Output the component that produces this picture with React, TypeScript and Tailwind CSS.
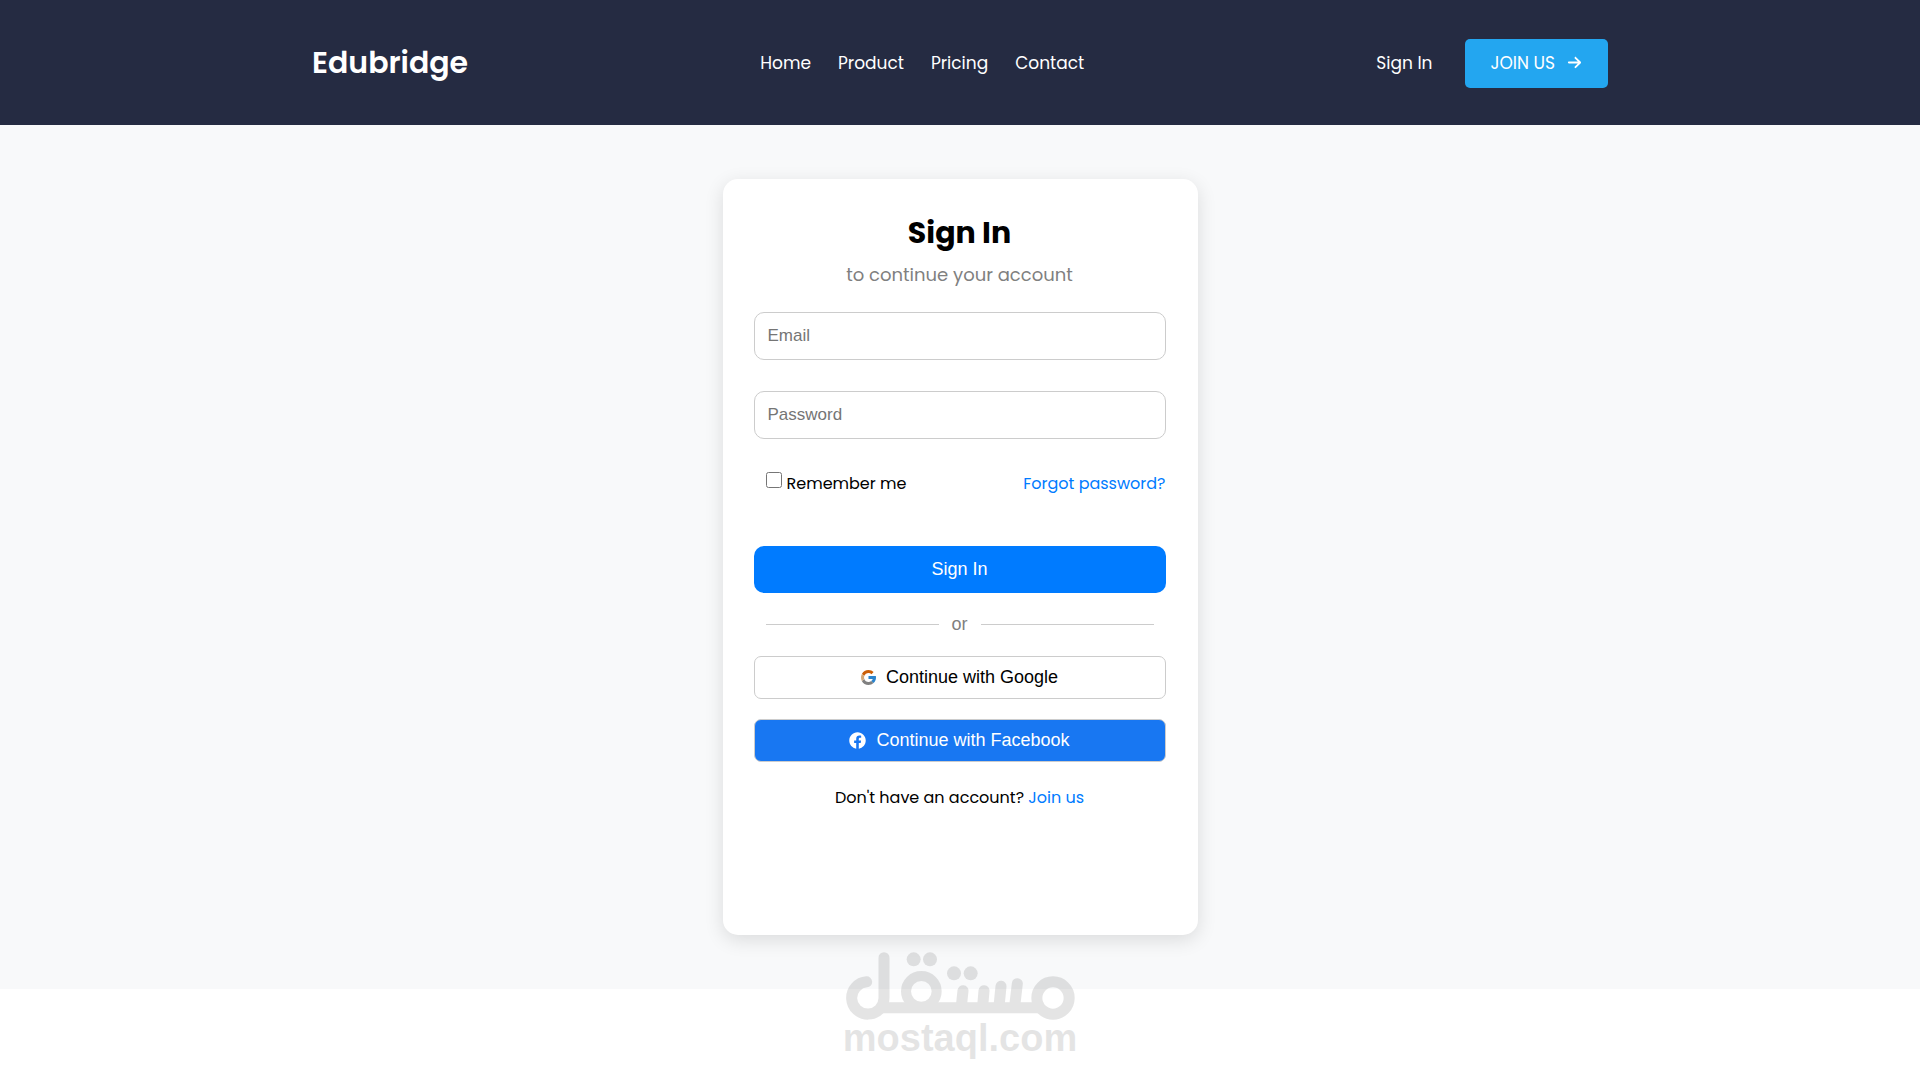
import { FaFacebook } from "react-icons/fa";
import { FaArrowRight } from "react-icons/fa6";

const navLinks = ["Home", "Product", "Pricing", "Contact"];

function GoogleIcon() {
  return (
    <svg viewBox="4 4 40 40" className="size-[15px] shrink-0" aria-hidden="true">
      <path fill="#2b84cd" d="M43.6 20H24v8h11.3c-.8 2.2-2.2 4.2-4.1 5.6l6.2 5.2C37 39.2 44 34 44 24c0-1.300-.1-2.700-.4-4z" />
      <path fill="#cc5f08" d="M6.300 14.700l6.600 4.800C14.700 15.100 19 12 24 12c3.100 0 5.800 1.200 8 3l5.700-5.700C34 6.100 29.300 4 24 4 16.300 4 9.700 8.300 6.300 14.700z" />
      <path fill="#808080" d="M24 44c5.200 0 9.900-2 13.400-5.200l-6.200-5.200C29.200 35.100 26.700 36 24 36c-5.200 0-9.600-3.300-11.300-7.900l-6.500 5C9.500 39.600 16.200 44 24 44z" />
      <path fill="#d3a878" d="M12.900 19.500l-6.600-4.800C4.800 17.500 4 20.700 4 24c0 3.300.8 6.400 2.200 9.100l6.500-5c-.9-2.700-.9-5.800.2-8.600z" />
    </svg>
  );
}

function Header() {
  return (
    <header className="bg-[#252b42] text-white">
      <div className="mx-auto flex h-[125px] max-w-[1296px] items-center justify-between">
        <a href="#" className="text-[30px] font-semibold">
          Edubridge
        </a>
        <nav className="flex gap-[27px] pt-[3px] text-[17px]">
          {navLinks.map((label) => (
            <a key={label} href="#">
              {label}
            </a>
          ))}
        </nav>
        <div className="flex items-center gap-8 pt-[2px] text-[17px]">
          <a href="#">Sign In</a>
          <button type="button" className="flex h-[49px] items-center gap-3 rounded-[5px] bg-[#23a6f0] px-[26px]">
            JOIN US
            <FaArrowRight className="mb-[2px] size-[15px]" />
          </button>
        </div>
      </div>
    </header>
  );
}

function SignInCard() {
  return (
    <form className="flex min-h-[756px] w-full max-w-[475px] flex-col rounded-[15px] bg-white pt-[33px] pr-8 pl-[31px] shadow-[0_5px_19px_rgba(0,0,0,0.12)]">
      <h1 className="text-center text-[30px] leading-[42px] font-bold">Sign In</h1>
      <p className="mt-[7px] text-center text-[18px] leading-[27px] text-[#808080]">to continue your account</p>
      <input
        type="email"
        aria-label="Email"
        placeholder="Email"
        className="mt-6 h-12 rounded-[10px] border border-[#ccc] px-[13px] font-['Liberation_Sans',sans-serif] text-[17px] placeholder:text-[#757575]"
      />
      <input
        type="password"
        aria-label="Password"
        placeholder="Password"
        className="mt-[31px] h-12 rounded-[10px] border border-[#ccc] px-[13px] font-['Liberation_Sans',sans-serif] text-[17px] placeholder:text-[#757575]"
      />
      <div className="mt-[31px] flex items-start justify-between text-[16px] leading-[27px]">
        <label className="flex gap-[5px] pl-3">
          <input type="checkbox" className="mt-[2px] size-4" />
          Remember me
        </label>
        <a href="#" className="text-[#007bff]">
          Forgot password?
        </a>
      </div>
      <button
        type="submit"
        className="mt-[49px] h-[47px] rounded-[10px] bg-[#007bff] font-['Liberation_Sans',sans-serif] text-[18px] text-white"
      >
        Sign In
      </button>
      <div className="mx-3 mt-[18px] flex items-center gap-[13px] font-['Liberation_Sans',sans-serif] text-[18px] leading-[27px] text-[#808080]">
        <span className="h-px flex-1 bg-[#ccc]" />
        or
        <span className="h-px flex-1 bg-[#ccc]" />
      </div>
      <button
        type="button"
        className="mt-[18px] flex h-[43px] items-center justify-center gap-[10px] rounded-[7px] border border-[#ccc] font-['Liberation_Sans',sans-serif] text-[18px]"
      >
        <GoogleIcon />
        Continue with Google
      </button>
      <button
        type="button"
        className="mt-5 flex h-[43px] items-center justify-center gap-[10px] rounded-[7px] border border-[#ccc] bg-[#1877f2] font-['Liberation_Sans',sans-serif] text-[18px] text-white"
      >
        <FaFacebook className="size-[17px]" />
        Continue with Facebook
      </button>
      <p className="mt-[22px] text-center text-[16px] leading-[27px]">
        Don't have an account?{" "}
        <a href="#" className="text-[#007bff]">
          Join us
        </a>
      </p>
    </form>
  );
}

function Watermark() {
  return (
    <div className="pointer-events-none absolute inset-x-0 bottom-6 flex flex-col items-center opacity-10">
      <svg viewBox="405 155 690 204" className="w-[230px]" fill="none" stroke="#000" strokeWidth="33" role="img" aria-label="مستقل">
        <path strokeLinecap="round" d="M470 244.500A48.500 48.500 0 1 0 522 293V172" />
        <path d="M510 322H1000" />
        <circle cx="634" cy="273" r="46" strokeWidth="30" />
        <circle cx="1029" cy="293" r="48.500" />
        <path strokeLinecap="round" d="M759 271L754 318M822 271L818 318M873 258L867 318M922 250L914 318" />
        <g fill="#000" stroke="none">
          <circle cx="611" cy="177" r="21" />
          <circle cx="660" cy="177" r="21" />
          <circle cx="732" cy="219" r="21" />
          <circle cx="782" cy="219" r="21" />
        </g>
      </svg>
      <span className="font-['Liberation_Sans',sans-serif] text-[38px] leading-[36px] font-bold text-black">mostaql.com</span>
    </div>
  );
}

export default function App() {
  return (
    <div className="relative min-h-screen bg-white font-['Poppins','Inter',sans-serif] text-black">
      <Header />
      <main className="flex justify-center bg-[#f8f9fa] py-[54px]">
        <SignInCard />
      </main>
      <Watermark />
    </div>
  );
}
